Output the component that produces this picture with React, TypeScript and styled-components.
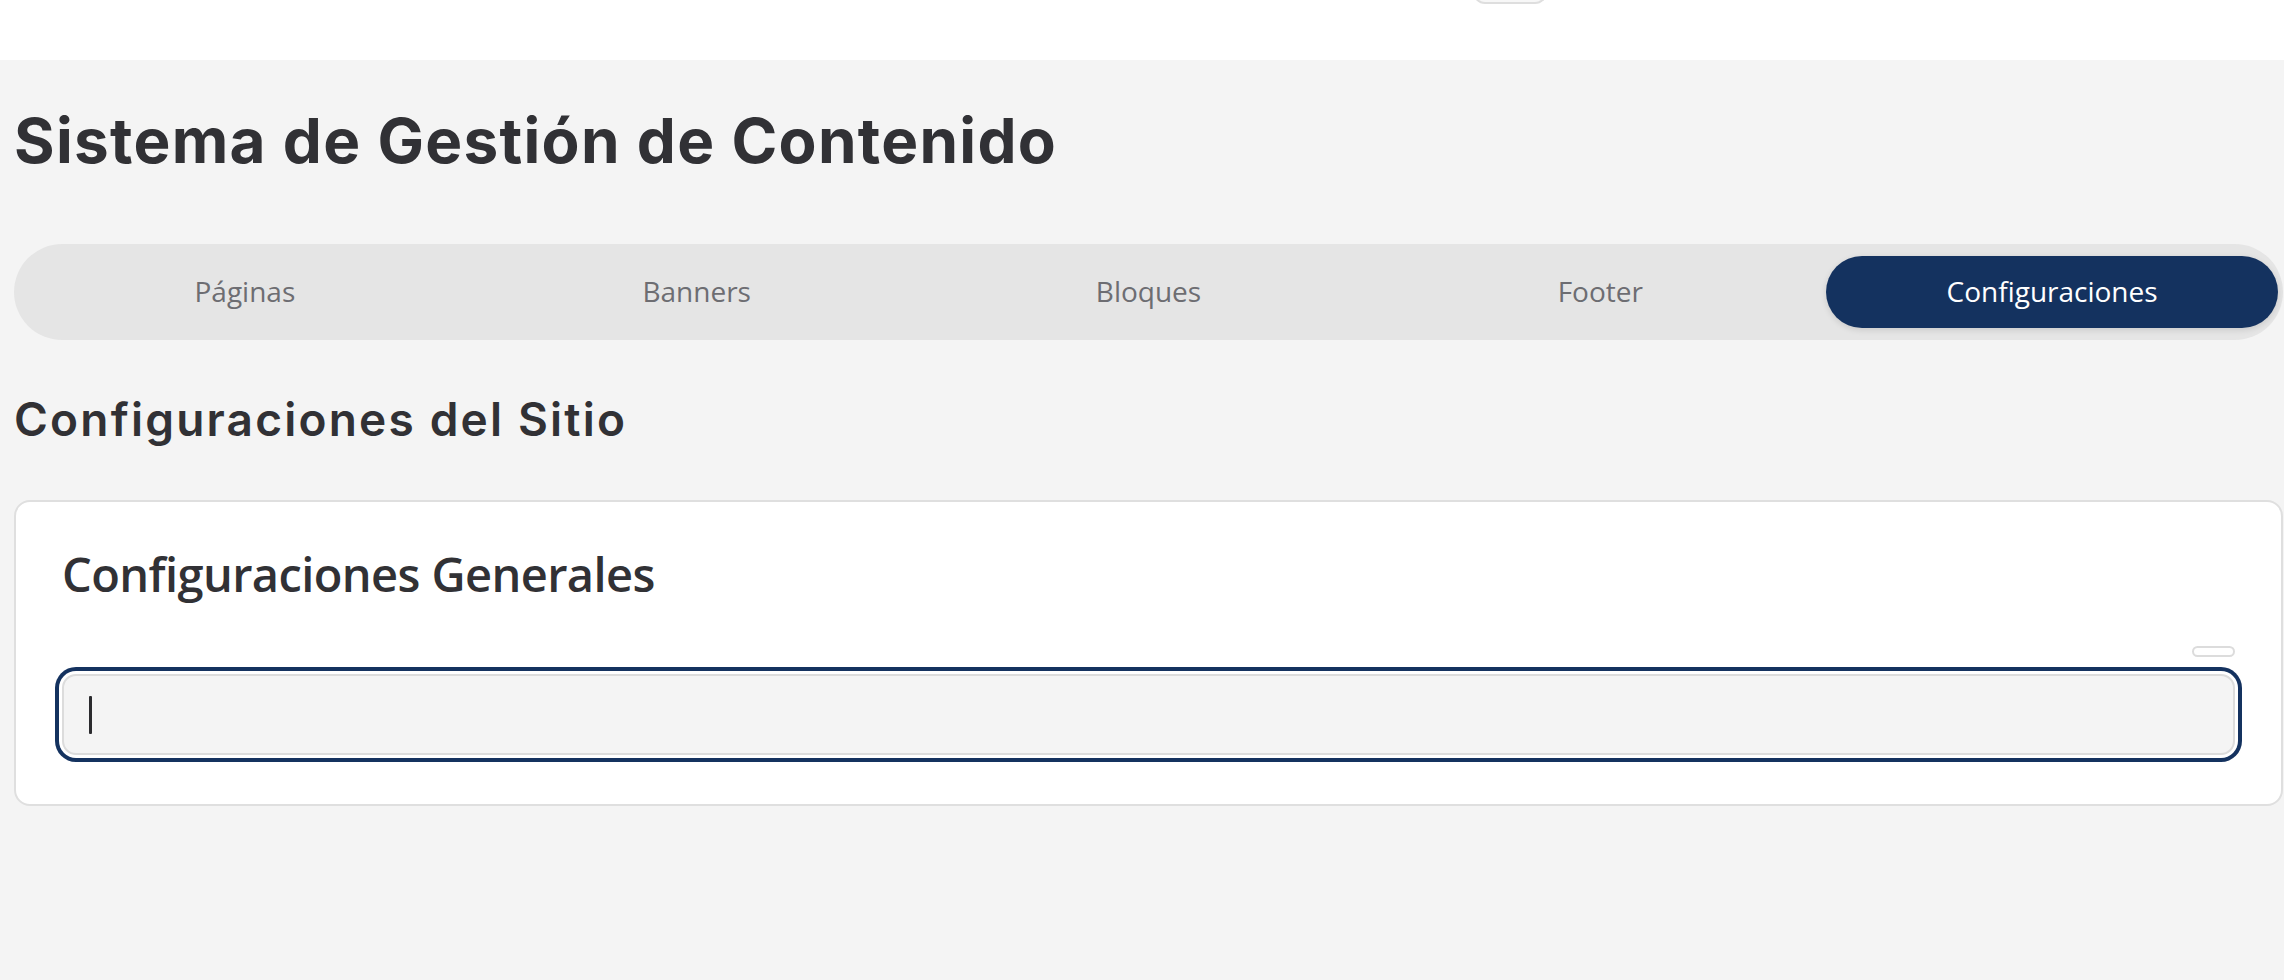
import React, { useState } from "react";
import styled, { createGlobalStyle } from "styled-components";

const GlobalStyle = createGlobalStyle`
  html, body {
    margin: 0;
    padding: 0;
    background: #f4f4f4;
    font-family: "Open Sans", "Noto Sans", sans-serif;
    overflow: hidden;
  }
  * { box-sizing: border-box; }
`;

const TopBar = styled.header`
  height: 60px;
  background: #ffffff;
  display: flex;
  align-items: flex-start;
  padding-left: 1473px;
`;

const TopBarTab = styled.div`
  width: 74px;
  height: 40px;
  margin-top: -36px;
  border: 2px solid #dedede;
  border-top: none;
  border-radius: 0 0 12px 12px;
  background: #f7f7f7;
`;

const Main = styled.main`
  padding: 0 1px 40px 14px;
`;

const PageTitle = styled.h1`
  margin: 44px 0 66px 0;
  font-family: Inter, "Liberation Sans", sans-serif;
  font-weight: 700;
  font-size: 62px;
  line-height: 1.2;
  color: #313135;
  letter-spacing: 1.3px;
`;

const TabList = styled.nav`
  display: grid;
  grid-template-columns: repeat(5, 1fr);
  height: 96px;
  padding: 12px 5px;
  background: #e5e5e5;
  border-radius: 48px;
`;

const TabButton = styled.button<{ $active?: boolean }>`
  border: none;
  border-radius: 36px;
  padding: 0 0 2px 0;
  background: ${(p) => (p.$active ? "#14325f" : "transparent")};
  color: ${(p) => (p.$active ? "#ffffff" : "#6d6d72")};
  font-family: "Open Sans", "Noto Sans", sans-serif;
  font-size: 28px;
  font-weight: 400;
  cursor: pointer;
  box-shadow: ${(p) => (p.$active ? "0 2px 6px rgba(0,0,0,0.12)" : "none")};
`;

const SectionTitle = styled.h2`
  margin: 52px 0 52px 0;
  font-family: Inter, "Liberation Sans", sans-serif;
  font-weight: 600;
  font-size: 46px;
  line-height: 1.2;
  color: #313135;
  letter-spacing: 2.2px;
`;

const Card = styled.section`
  background: #ffffff;
  border: 2px solid #dfdfdf;
  border-radius: 16px;
  padding: 44px 46px 49px 46px;
`;

const CardTitle = styled.h3`
  margin: 0 0 44px 0;
  font-family: "Open Sans", "Noto Sans", sans-serif;
  font-weight: 600;
  font-size: 47px;
  line-height: 1.2;
  color: #313135;
  letter-spacing: -0.6px;
`;

const FieldMeta = styled.div`
  display: flex;
  justify-content: flex-end;
  margin-bottom: 17px;
`;

const Counter = styled.span`
  width: 43px;
  height: 11px;
  border: 2px solid #dcdcdc;
  border-radius: 6px;
  background: #ffffff;
`;

const InputWrap = styled.div`
  position: relative;
`;

const TextInput = styled.input<{ $focused?: boolean }>`
  display: block;
  width: 100%;
  height: 81px;
  padding: 0 24px;
  border: 2px solid #dcdcdc;
  border-radius: 14px;
  background: #f4f4f4;
  font-family: "Open Sans", "Noto Sans", sans-serif;
  font-size: 28px;
  color: #313135;
  caret-color: transparent;
  outline: none;
  box-shadow: ${(p) =>
    p.$focused ? "0 0 0 3px #ffffff, 0 0 0 7px #14325f" : "none"};
`;

const Caret = styled.span`
  position: absolute;
  left: 27px;
  top: 22px;
  width: 3px;
  height: 38px;
  background: #2b2b2e;
  border-radius: 1px;
  pointer-events: none;
`;

const tabs = ["Páginas", "Banners", "Bloques", "Footer", "Configuraciones"];

export default function App() {
  const [active, setActive] = useState(4);
  const [value, setValue] = useState("");
  return (
    <>
      <GlobalStyle />
      <TopBar>
        <TopBarTab />
      </TopBar>
      <Main>
        <PageTitle>Sistema de Gestión de Contenido</PageTitle>
        <TabList>
          {tabs.map((t, i) => (
            <TabButton key={t} $active={i === active} onClick={() => setActive(i)}>
              {t}
            </TabButton>
          ))}
        </TabList>
        <SectionTitle>Configuraciones del Sitio</SectionTitle>
        <Card>
          <CardTitle>Configuraciones Generales</CardTitle>
          <FieldMeta>
            <Counter />
          </FieldMeta>
          <InputWrap>
            <TextInput
              autoFocus
              $focused
              value={value}
              onChange={(e) => setValue(e.target.value)}
            />
            {value === "" && <Caret />}
          </InputWrap>
        </Card>
      </Main>
    </>
  );
}
